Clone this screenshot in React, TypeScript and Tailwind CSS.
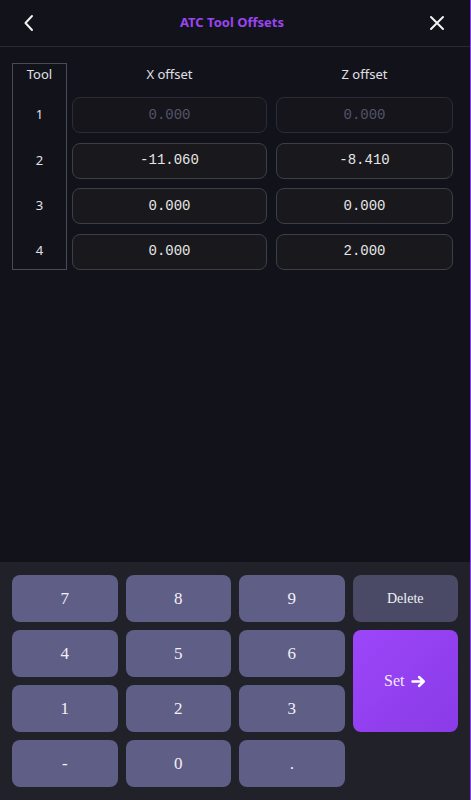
import React from "react";

const rows = [
  { tool: "1", x: "0.000", z: "0.000", placeholder: true },
  { tool: "2", x: "-11.060", z: "-8.410" },
  { tool: "3", x: "0.000", z: "0.000" },
  { tool: "4", x: "0.000", z: "2.000" },
];

function Cell({ value, placeholder }: { value: string; placeholder?: boolean }) {
  return (
    <div
      className={
        "h-[36px] rounded-[8px] border flex items-center justify-center text-[14px] " +
        (placeholder
          ? "border-[#2c2c36] bg-[#15151b] text-[#54546a]"
          : "border-[#3e3e48] bg-[#19191d] text-[#e6e6e6]")
      }
      style={{ fontFamily: '"Liberation Mono", monospace' }}
    >
      {value}
    </div>
  );
}

function Key({ label, className = "", small }: { label: React.ReactNode; className?: string; small?: boolean }) {
  return (
    <button
      className={
        "rounded-[8px] flex items-center justify-center text-[#f0f0f5] " +
        (small ? "text-[14px] " : "text-[17px] ") +
        className
      }
      style={{ fontFamily: '"Liberation Serif", serif' }}
    >
      {label}
    </button>
  );
}

export default function App() {
  return (
    <div
      className="w-[471px] h-[800px] bg-[#12121a] flex flex-col border-r border-[#8a3ef0] overflow-hidden"
      style={{ fontFamily: '"Noto Sans", sans-serif' }}
    >
      {/* header */}
      <div className="h-[47px] shrink-0 border-b border-[#2a2a33] flex items-center justify-between px-[22px]">
        <svg width="14" height="18" viewBox="0 0 14 18" fill="none">
          <path d="M10 2 L3.5 9 L10 16" stroke="#f2f2f2" strokeWidth="2" strokeLinecap="round" strokeLinejoin="round" />
        </svg>
        <div className="text-[13px] font-bold text-[#9b45f0]">ATC Tool Offsets</div>
        <svg width="18" height="18" viewBox="0 0 18 18" fill="none" className="mr-[2px]">
          <path d="M3 3 L15 15 M15 3 L3 15" stroke="#f2f2f2" strokeWidth="2" strokeLinecap="round" />
        </svg>
      </div>

      {/* table */}
      <div className="flex pl-[12px] pt-[16px] gap-[5px]">
        <div className="w-[55px] h-[207px] border border-[#4a4a55] flex flex-col items-center text-[13px] text-[#e0e0e6]">
          <div className="h-[24px] flex items-center mt-[-1px]">Tool</div>
          {rows.map((r, i) => (
            <div key={i} className={"h-[36px] flex items-center " + (i === 0 ? "mt-[10px]" : "mt-[9.5px]")}>
              {r.tool}
            </div>
          ))}
        </div>
        <div className="w-[195px] flex flex-col">
          <div className="h-[24px] flex items-center justify-center text-[13px] text-[#e0e0e6]">X offset</div>
          {rows.map((r, i) => (
            <div key={i} className={i === 0 ? "mt-[10px]" : "mt-[9.5px]"}>
              <Cell value={r.x} placeholder={r.placeholder} />
            </div>
          ))}
        </div>
        <div className="w-[177px] ml-[4px] flex flex-col">
          <div className="h-[24px] flex items-center justify-center text-[13px] text-[#e0e0e6]">Z offset</div>
          {rows.map((r, i) => (
            <div key={i} className={i === 0 ? "mt-[10px]" : "mt-[9.5px]"}>
              <Cell value={r.z} placeholder={r.placeholder} />
            </div>
          ))}
        </div>
      </div>

      <div className="flex-1" />

      {/* keypad */}
      <div className="h-[238px] shrink-0 bg-[#21212a] pt-[13px] pl-[12px] pr-[12px]">
        <div className="grid grid-cols-[105.5px_105.5px_105.5px_105.5px] grid-rows-[47px_47px_47px_47px] gap-[8px]">
          <Key label="7" className="bg-[#5f5e87]" />
          <Key label="8" className="bg-[#5f5e87]" />
          <Key label="9" className="bg-[#5f5e87]" />
          <Key label="Delete" small className="bg-[#4a4a66]" />
          <Key label="4" className="bg-[#5f5e87]" />
          <Key label="5" className="bg-[#5f5e87]" />
          <Key label="6" className="bg-[#5f5e87]" />
          <button
            className="row-span-2 rounded-[8px] flex items-center justify-center gap-[7px] text-[16px] text-[#f3eafe] bg-gradient-to-br from-[#9c46fa] to-[#8a3be6]"
            style={{ fontFamily: '"Liberation Serif", serif' }}
          >
            <span>Set</span>
            <svg width="15" height="13" viewBox="0 0 15 13" fill="none">
              <path d="M1.5 6.5 H12.5 M8 2 L12.8 6.5 L8 11" stroke="#ffffff" strokeWidth="2.4" strokeLinecap="round" strokeLinejoin="round" />
            </svg>
          </button>
          <Key label="1" className="bg-[#5f5e87]" />
          <Key label="2" className="bg-[#5f5e87]" />
          <Key label="3" className="bg-[#5f5e87]" />
          <Key label="-" className="bg-[#5f5e87]" />
          <Key label="0" className="bg-[#5f5e87]" />
          <Key label="." className="bg-[#5f5e87]" />
        </div>
      </div>
    </div>
  );
}
